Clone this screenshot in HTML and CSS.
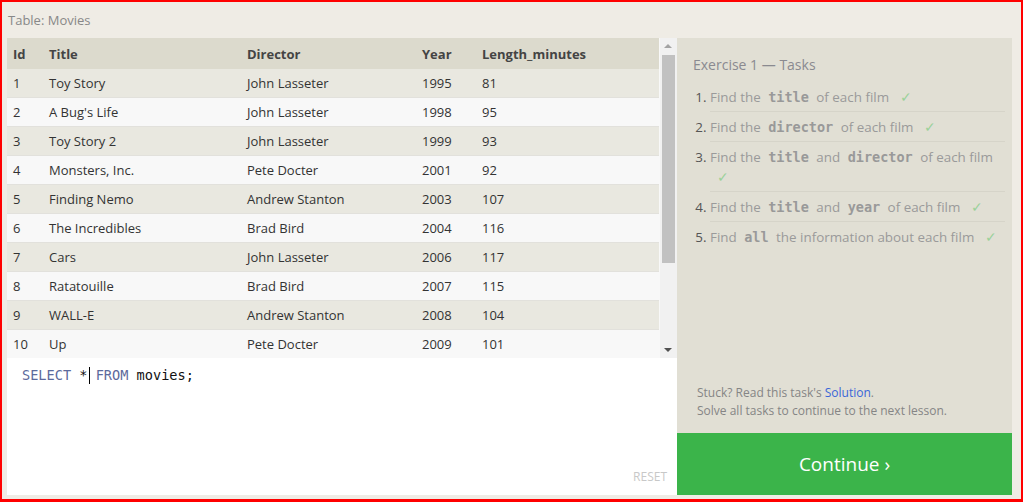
FILE: index.html
```html
<!DOCTYPE html>
<html>
<head>
<meta charset="utf-8">
<title>SQL Lesson</title>
<link rel="stylesheet" href="styles.css">
</head>
<body>
<div class="frame">
  <div class="label">Table: Movies</div>
  <div class="left">
    <div class="table-box">
      <div class="table-scroll">
        <table class="movies">
          <colgroup>
            <col class="c-id"><col class="c-title"><col class="c-dir"><col class="c-year"><col>
          </colgroup>
          <thead>
            <tr><th>Id</th><th>Title</th><th>Director</th><th>Year</th><th>Length_minutes</th></tr>
          </thead>
          <tbody>
            <tr><td>1</td><td>Toy Story</td><td>John Lasseter</td><td>1995</td><td>81</td></tr>
            <tr><td>2</td><td>A Bug's Life</td><td>John Lasseter</td><td>1998</td><td>95</td></tr>
            <tr><td>3</td><td>Toy Story 2</td><td>John Lasseter</td><td>1999</td><td>93</td></tr>
            <tr><td>4</td><td>Monsters, Inc.</td><td>Pete Docter</td><td>2001</td><td>92</td></tr>
            <tr><td>5</td><td>Finding Nemo</td><td>Andrew Stanton</td><td>2003</td><td>107</td></tr>
            <tr><td>6</td><td>The Incredibles</td><td>Brad Bird</td><td>2004</td><td>116</td></tr>
            <tr><td>7</td><td>Cars</td><td>John Lasseter</td><td>2006</td><td>117</td></tr>
            <tr><td>8</td><td>Ratatouille</td><td>Brad Bird</td><td>2007</td><td>115</td></tr>
            <tr><td>9</td><td>WALL-E</td><td>Andrew Stanton</td><td>2008</td><td>104</td></tr>
            <tr><td>10</td><td>Up</td><td>Pete Docter</td><td>2009</td><td>101</td></tr>
          </tbody>
        </table>
      </div>
      <div class="scrollbar">
        <div class="arrow up"></div>
        <div class="track"><div class="thumb"></div></div>
        <div class="arrow down"></div>
      </div>
    </div>
    <div class="editor">
      <div class="code"><span class="kw">SELECT</span> *<span class="caret"></span> <span class="kw">FROM</span> movies;</div>
      <div class="reset">RESET</div>
    </div>
  </div>
  <div class="right">
    <div class="panel">
      <div class="ex-title">Exercise 1 — Tasks</div>
      <ol class="tasks">
        <li>Find the <code>title</code> of each film <span class="check">✓</span></li>
        <li>Find the <code>director</code> of each film <span class="check">✓</span></li>
        <li>Find the <code>title</code> and <code>director</code> of each film <span class="check">✓</span></li>
        <li>Find the <code>title</code> and <code>year</code> of each film <span class="check">✓</span></li>
        <li>Find <code>all</code> the information about each film <span class="check">✓</span></li>
      </ol>
      <div class="stuck">
        <div>Stuck? Read this task's <a class="sol">Solution</a>.</div>
        <div>Solve all tasks to continue to the next lesson.</div>
      </div>
    </div>
    <div class="continue">Continue ›</div>
  </div>
</div>
</body>
</html>
```

FILE: styles.css
```css
* { box-sizing: border-box; }
html, body { margin: 0; padding: 0; }
body {
  font-family: "Open Sans", "Noto Sans", sans-serif;
  background: #efece5;
}
.frame {
  width: 1023px;
  height: 502px;
  border: 2px solid #ff0000;
  border-bottom-width: 3px;
  background: #efece5;
  padding: 0 9px 4px 5px;
  display: grid;
  grid-template-columns: 670px 335px;
  grid-template-rows: 36px 1fr;
}
.label {
  grid-column: 1 / 3;
  font-size: 13px;
  color: #888;
  line-height: 36px;
  padding-left: 1px;
}
.left {
  display: flex;
  flex-direction: column;
}
.table-box {
  height: 320px;
  display: flex;
  background: #f8f8f8;
}
.table-scroll {
  flex: 1;
  overflow: hidden;
}
.movies {
  width: 652px;
  border-collapse: separate;
  border-spacing: 0;
  table-layout: fixed;
  font-size: 13px;
  color: #333;
}
.c-id { width: 36px; }
.c-title { width: 198px; }
.c-dir { width: 175px; }
.c-year { width: 60px; }
.movies th {
  text-align: left;
  font-weight: 700;
  color: #444;
  background: #dcdacd;
  height: 31px;
  padding: 0 0 0 6px;
  font-size: 13px;
}
.movies td {
  height: 29px;
  padding: 0 0 0 6px;
  border-bottom: 1px solid #e2e1dc;
  white-space: nowrap;
  line-height: 18px;
}
.movies tbody tr:nth-child(odd) td { background: #e9e8e0; }
.movies tbody tr:nth-child(even) td { background: #f8f8f8; }
.scrollbar {
  width: 17px;
  background: #f1f1f1;
  display: flex;
  flex-direction: column;
  align-items: center;
}
.arrow { width: 17px; height: 17px; position: relative; }
.arrow::after {
  content: "";
  position: absolute;
  left: 4px;
  border-left: 4px solid transparent;
  border-right: 4px solid transparent;
}
.arrow.up::after { top: 6px; border-bottom: 4px solid #a3a3a3; }
.arrow.down::after { top: 7px; border-top: 4px solid #505050; }
.track { flex: 1; width: 17px; padding: 0 2px; }
.thumb {
  height: 208px;
  background: #c1c1c1;
}
.editor {
  flex: 1;
  background: #fff;
  display: flex;
  flex-direction: column;
  padding: 8px 10px 10px 15px;
}
.code {
  font-family: "DejaVu Sans Mono", "Liberation Mono", monospace;
  font-size: 13.6px;
  line-height: 18px;
  color: #111;
  flex: 1;
}
.kw { color: #5c6a9c; }
.caret {
  display: inline-block;
  width: 1px;
  height: 17px;
  margin-left: 2px;
  margin-right: -3px;
  background: #000;
  vertical-align: -4px;
}
.reset {
  align-self: flex-end;
  font-size: 12px;
  color: #c8c8c8;
}
.right {
  display: flex;
  flex-direction: column;
}
.panel {
  flex: 1;
  background: #e1dfd4;
  padding: 17px 7px 13px 16px;
  display: flex;
  flex-direction: column;
}
.ex-title {
  font-size: 14px;
  color: #8a8a90;
  line-height: 20px;
  margin-bottom: 7px;
}
.tasks {
  margin: 0;
  padding-left: 17px;
  font-size: 13.4px;
  color: #9a9a9a;
}
.tasks li {
  line-height: 20px;
  padding: 5px 0 4px 0;
  border-bottom: 1px solid #d6d4c9;
}
.tasks li:last-child { border-bottom: none; }
.tasks li::marker { color: #555; }
.tasks code {
  font-family: "DejaVu Sans Mono", "Liberation Mono", monospace;
  font-weight: 700;
  font-size: 13.5px;
  line-height: 1;
  color: #999;
  padding: 0 4px;
}
.check {
  color: #9ad19a;
  margin-left: 7px;
  font-size: 14px;
  line-height: 1;
}
.stuck {
  margin-top: auto;
  padding-left: 4px;
  font-size: 12px;
  line-height: 18px;
  color: #858585;
}
.sol { color: #3a66d8; }
.continue {
  height: 62px;
  background: #3bb44a;
  color: #fff;
  font-size: 19px;
  display: flex;
  align-items: center;
  justify-content: center;
}
```
